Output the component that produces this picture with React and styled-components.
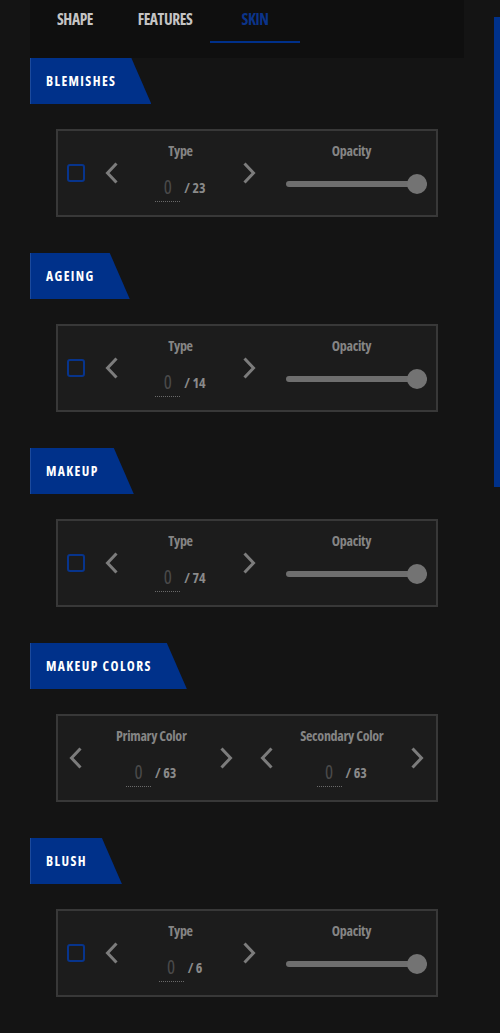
import React from 'react';
import styled, {createGlobalStyle} from 'styled-components';

const GlobalStyle = createGlobalStyle`
  html, body {
    margin: 0;
    padding: 0;
    background: #141414;
  }
  body {
    font-family: "Open Sans", "Roboto", sans-serif;
    font-stretch: 75%;
  }
`;

const Page = styled.div`
    width: 434px;
    margin-left: 30px;
    padding-bottom: 36px;
`;

const TabBar = styled.div`
    display: flex;
    height: 58px;
    background: #0f0f0f;
`;

const Tab = styled.div`
    width: 90px;
    height: 43px;
    box-sizing: border-box;
    padding-top: 8px;
    text-align: center;
    font-size: 15.5px;
    font-weight: 700;
    letter-spacing: -0.4px;
    color: ${(props) => (props.active ? '#0b348a' : '#c4c4c4')};
    border-bottom: 2px solid ${(props) => (props.active ? '#00308a' : 'transparent')};
`;

const Section = styled.section`
    & + & {
        margin-top: 36px;
    }
`;

const Tag = styled.div`
    display: inline-block;
    height: 46px;
    line-height: 46px;
    box-sizing: border-box;
    padding: 0 35px 0 15px;
    background: #00318a;
    border-left: 1px solid #1c4a9c;
    clip-path: polygon(0 0, calc(100% - 20px) 0, 100% 100%, 0 100%);
    color: #ffffff;
    font-size: 13.5px;
    font-weight: 700;
    letter-spacing: 1.4px;
`;

const Card = styled.div`
    display: flex;
    align-items: center;
    margin: 25px 26px 0;
    height: 88px;
    box-sizing: border-box;
    padding: 0 9px;
    background: #1c1c1c;
    border: 2px solid #383838;
`;

const ColorCard = styled(Card)`
    padding: 0 12px 0 11px;
    gap: 26px;
`;

const Check = styled.div`
    width: 18px;
    height: 18px;
    box-sizing: border-box;
    border: 2px solid #07348c;
    border-radius: 3px;
    flex-shrink: 0;
`;

const Stepper = styled.div`
    display: flex;
    align-items: center;
    justify-content: space-between;
    width: ${(props) => (props.wide ? 'auto' : '151px')};
    flex: ${(props) => (props.wide ? '1' : 'none')};
    margin-left: ${(props) => (props.wide ? '0' : '20px')};
`;

const Arrow = styled.svg`
    width: 13px;
    height: 22px;
    flex-shrink: 0;
`;

const Field = styled.div`
    display: flex;
    flex-direction: column;
    align-items: center;
    padding-bottom: 3px;
`;

const Label = styled.div`
    font-size: 14px;
    line-height: 20px;
    font-weight: 700;
    letter-spacing: -0.3px;
    color: #858585;
    height: 20px;
`;

const ValueRow = styled.div`
    display: flex;
    align-items: flex-end;
    gap: 4px;
    margin-top: 16px;
`;

const Value = styled.div`
    width: 25px;
    text-align: center;
    font-size: 19px;
    line-height: 20px;
    color: #4a4a4a;
    padding-bottom: 4px;
    border-bottom: 1px dotted #6a6a6a;
`;

const Total = styled.div`
    font-size: 14px;
    font-weight: 700;
    color: #8a8a8a;
    padding-bottom: 5px;
`;

const SliderGroup = styled.div`
    display: flex;
    flex-direction: column;
    align-items: center;
    width: 151px;
    margin-left: 20px;
    padding-bottom: 12px;
`;

const Track = styled.div`
    position: relative;
    align-self: stretch;
    margin: 13px 0 0 10px;
    height: 20px;
    display: flex;
    align-items: center;
`;

const Rail = styled.div`
    flex: 1;
    height: 6px;
    border-radius: 3px;
    background: #6e6e6e;
`;

const Thumb = styled.div`
    position: absolute;
    right: 0;
    top: 0;
    width: 20px;
    height: 20px;
    border-radius: 50%;
    background: #737373;
`;

const ScrollThumb = styled.div`
    position: fixed;
    right: 0;
    top: 17px;
    width: 6px;
    height: 470px;
    background: #00318a;
`;

const Chevron = ({dir}) => (
    <Arrow viewBox="0 0 13 22">
        <polyline
            points={dir === 'left' ? '11.5,1.5 2.5,11 11.5,20.5' : '1.5,1.5 10.5,11 1.5,20.5'}
            fill="none"
            stroke="#7c7c7c"
            strokeWidth="3"
        />
    </Arrow>
);

const Picker = ({label, total, wide}) => (
    <Stepper wide={wide}>
        <Chevron dir="left" />
        <Field>
            <Label>{label}</Label>
            <ValueRow>
                <Value>0</Value>
                <Total>/ {total}</Total>
            </ValueRow>
        </Field>
        <Chevron dir="right" />
    </Stepper>
);

const TypeCard = ({total}) => (
    <Card>
        <Check />
        <Picker label="Type" total={total} />
        <SliderGroup>
            <Label>Opacity</Label>
            <Track>
                <Rail />
                <Thumb />
            </Track>
        </SliderGroup>
    </Card>
);

const sections = [
    {title: 'BLEMISHES', total: 23},
    {title: 'AGEING', total: 14},
    {title: 'MAKEUP', total: 74},
    {title: 'MAKEUP COLORS', colors: 63},
    {title: 'BLUSH', total: 6},
];

const App = () => (
    <>
        <GlobalStyle />
        <Page>
            <TabBar>
                <Tab>SHAPE</Tab>
                <Tab>FEATURES</Tab>
                <Tab active>SKIN</Tab>
            </TabBar>
            {sections.map((s) => (
                <Section key={s.title}>
                    <Tag>{s.title}</Tag>
                    {s.colors ? (
                        <ColorCard>
                            <Picker wide label="Primary Color" total={s.colors} />
                            <Picker wide label="Secondary Color" total={s.colors} />
                        </ColorCard>
                    ) : (
                        <TypeCard total={s.total} />
                    )}
                </Section>
            ))}
        </Page>
        <ScrollThumb />
    </>
);

export default App;
